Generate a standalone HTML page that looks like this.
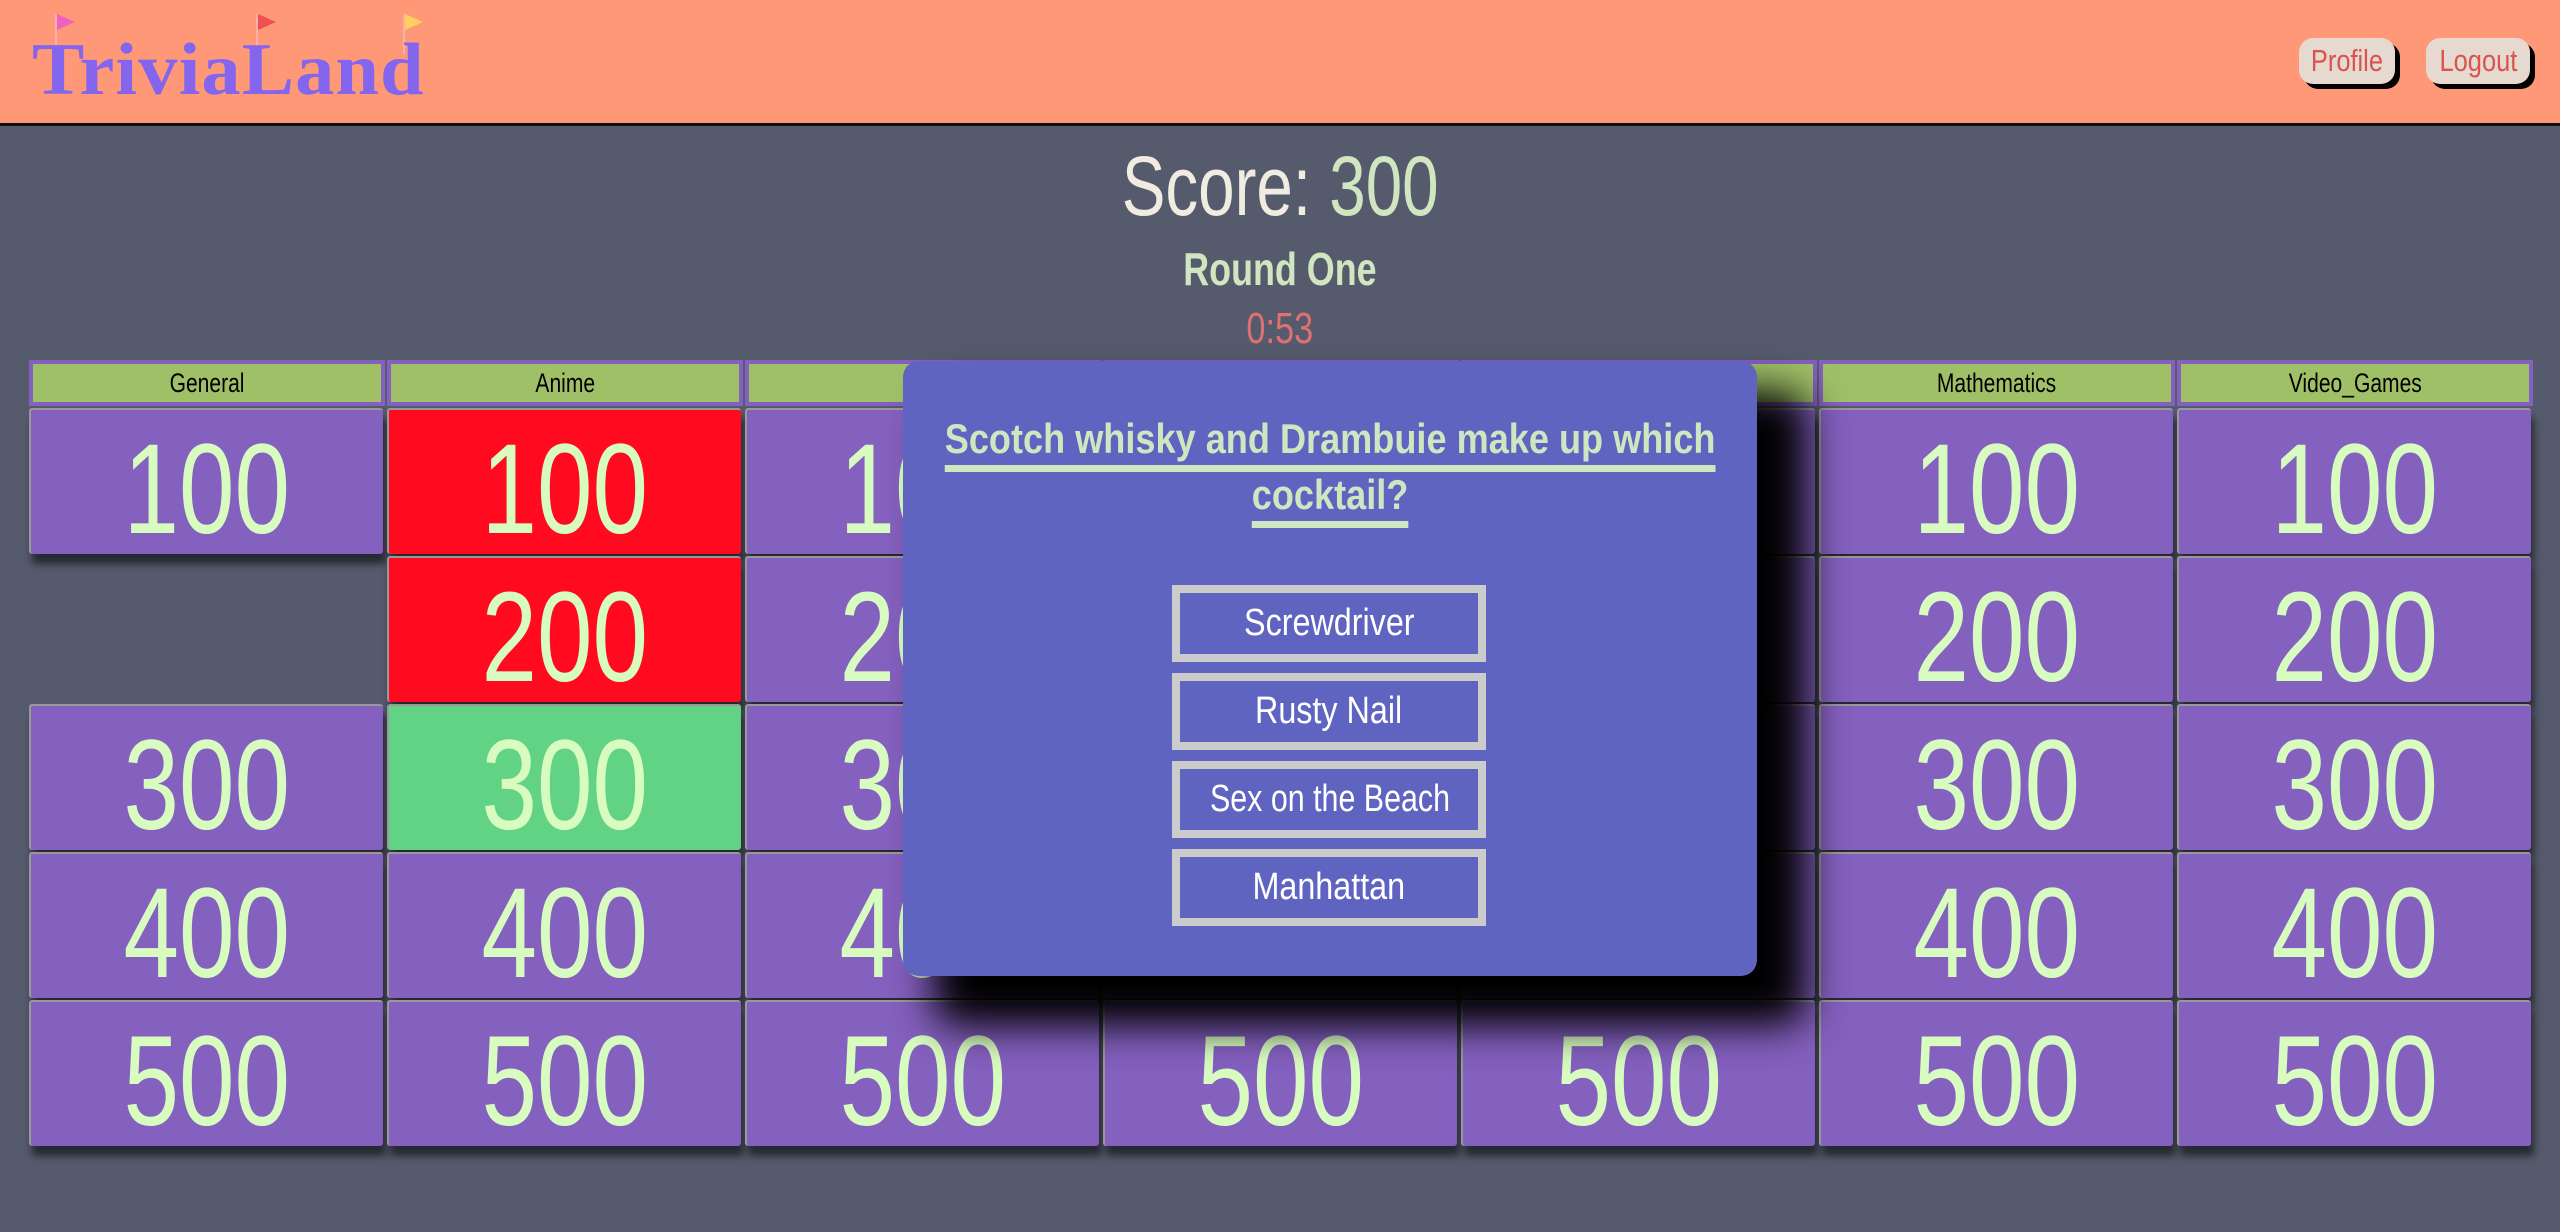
<!DOCTYPE html>
<html><head><meta charset="utf-8"><style>
*{margin:0;padding:0;box-sizing:border-box}
body{width:2560px;height:1232px;background:#555a6c;position:relative;overflow:hidden;font-family:"Liberation Sans",sans-serif}
.hdr{position:absolute;left:0;top:0;width:2560px;height:126px;background:#ff9877;border-bottom:3px solid #111}
.logo{position:absolute;left:32px;top:28px;font-family:"Liberation Serif",serif;font-weight:bold;font-size:74px;color:#8466ee;letter-spacing:1px;transform:scaleX(1.06);transform-origin:left}
.flag{position:absolute;width:2px;height:40px;background:#f7b0b0}
.flag i{position:absolute;left:2px;top:0;width:0;height:0;border-top:8px solid transparent;border-bottom:8px solid transparent;border-left:18px solid}
.btn{position:absolute;top:38px;height:46px;background:#e6d9cf;border-radius:14px;box-shadow:5px 5px 0 #000;color:#d9534f;font-size:31px;text-align:center;line-height:46px}
.btn span{display:inline-block;transform:scaleX(.82)}
.c{position:absolute;text-align:center}
.sq{display:inline-block;transform:scaleX(.78)}
.h{position:absolute;top:360px;height:46px;background:#a0c068;border:4px solid #8460c0;font-size:27px;line-height:38px;text-align:center;color:#000}
.cell{position:absolute;width:354px;height:146px;background:#8460bf;color:#d8fcc0;font-size:128px;line-height:160px;text-align:center;box-shadow:3px 10px 8px rgba(0,0,0,.55);border-top:2px solid #999;border-left:2px solid #999;border-radius:3px}
.modal{position:absolute;left:903px;top:361px;width:854px;height:615px;background:#5f64c0;border-radius:16px;box-shadow:40px 40px 40px 10px #000}
.q{position:absolute;left:-300px;width:1454px;top:50px;text-align:center;color:#cfe6c0;font-weight:bold;font-size:42px;line-height:56px;white-space:nowrap}
.q .sq{transform:scaleX(.86);text-decoration:underline;text-decoration-thickness:7px;text-underline-offset:12px}
.a{position:absolute;left:269px;width:314px;height:77px;border:8px solid #cccccc;color:#fff;font-size:38px;text-align:center;line-height:60px}
</style></head><body>
<div class="hdr">
 <div class="flag" style="left:55px;top:14px"><i style="border-left-color:#f060c0"></i></div>
 <div class="flag" style="left:256px;top:14px"><i style="border-left-color:#f05050"></i></div>
 <div class="flag" style="left:403px;top:14px"><i style="border-left-color:#ffd060"></i></div>
 <div class="logo">TriviaLand</div>
 <div class="btn" style="left:2299px;width:96px"><span>Profile</span></div>
 <div class="btn" style="left:2426px;width:104px"><span>Logout</span></div>
</div>
<div class="c" style="left:0;width:2560px;top:138px;font-size:84px;color:#f0ece0"><span class="sq">Score: <span style="color:#cfe6c0">300</span></span></div>
<div class="c" style="left:0;width:2560px;top:242px;font-size:46px;font-weight:bold;color:#cfe6c0"><span class="sq">Round One</span></div>
<div class="c" style="left:0;width:2560px;top:304px;font-size:44px;color:#e07070"><span class="sq">0:53</span></div>

<div class="h" style="left:29px;width:356px"><span class="sq">General</span></div>
<div class="h" style="left:387px;width:356px"><span class="sq">Anime</span></div>
<div class="h" style="left:745px;width:356px"></div>
<div class="h" style="left:1103px;width:356px"></div>
<div class="h" style="left:1461px;width:356px"></div>
<div class="h" style="left:1819px;width:356px"><span class="sq">Mathematics</span></div>
<div class="h" style="left:2177px;width:356px"><span class="sq">Video_Games</span></div>

<div class="cell" style="left:29px;top:408px"><span class="sq">100</span></div>
<div class="cell" style="left:29px;top:704px"><span class="sq">300</span></div>
<div class="cell" style="left:29px;top:852px"><span class="sq">400</span></div>
<div class="cell" style="left:29px;top:1000px"><span class="sq">500</span></div>
<div class="cell" style="left:387px;top:408px;background:#ff0a1e"><span class="sq">100</span></div>
<div class="cell" style="left:387px;top:556px;background:#ff0a1e"><span class="sq">200</span></div>
<div class="cell" style="left:387px;top:704px;background:#62d384"><span class="sq">300</span></div>
<div class="cell" style="left:387px;top:852px"><span class="sq">400</span></div>
<div class="cell" style="left:387px;top:1000px"><span class="sq">500</span></div>
<div class="cell" style="left:745px;top:408px"><span class="sq">100</span></div>
<div class="cell" style="left:745px;top:556px"><span class="sq">200</span></div>
<div class="cell" style="left:745px;top:704px"><span class="sq">300</span></div>
<div class="cell" style="left:745px;top:852px"><span class="sq">400</span></div>
<div class="cell" style="left:745px;top:1000px"><span class="sq">500</span></div>
<div class="cell" style="left:1103px;top:408px"><span class="sq">100</span></div>
<div class="cell" style="left:1103px;top:556px"><span class="sq">200</span></div>
<div class="cell" style="left:1103px;top:704px"><span class="sq">300</span></div>
<div class="cell" style="left:1103px;top:852px"><span class="sq">400</span></div>
<div class="cell" style="left:1103px;top:1000px"><span class="sq">500</span></div>
<div class="cell" style="left:1461px;top:408px"><span class="sq">100</span></div>
<div class="cell" style="left:1461px;top:556px"><span class="sq">200</span></div>
<div class="cell" style="left:1461px;top:704px"><span class="sq">300</span></div>
<div class="cell" style="left:1461px;top:852px"><span class="sq">400</span></div>
<div class="cell" style="left:1461px;top:1000px"><span class="sq">500</span></div>
<div class="cell" style="left:1819px;top:408px"><span class="sq">100</span></div>
<div class="cell" style="left:1819px;top:556px"><span class="sq">200</span></div>
<div class="cell" style="left:1819px;top:704px"><span class="sq">300</span></div>
<div class="cell" style="left:1819px;top:852px"><span class="sq">400</span></div>
<div class="cell" style="left:1819px;top:1000px"><span class="sq">500</span></div>
<div class="cell" style="left:2177px;top:408px"><span class="sq">100</span></div>
<div class="cell" style="left:2177px;top:556px"><span class="sq">200</span></div>
<div class="cell" style="left:2177px;top:704px"><span class="sq">300</span></div>
<div class="cell" style="left:2177px;top:852px"><span class="sq">400</span></div>
<div class="cell" style="left:2177px;top:1000px"><span class="sq">500</span></div>

<div class="modal">
 <div class="q"><span class="sq">Scotch whisky and Drambuie make up which</span><br><span class="sq">cocktail?</span></div>
 <div class="a" style="top:224px"><span class="sq" style="transform:scaleX(.85)">Screwdriver</span></div>
 <div class="a" style="top:312px"><span class="sq" style="transform:scaleX(.85)">Rusty Nail</span></div>
 <div class="a" style="top:400px;white-space:nowrap"><span class="sq" style="transform:scaleX(.8)">Sex on the Beach</span></div>
 <div class="a" style="top:488px"><span class="sq" style="transform:scaleX(.85)">Manhattan</span></div>
</div>
</body></html>
